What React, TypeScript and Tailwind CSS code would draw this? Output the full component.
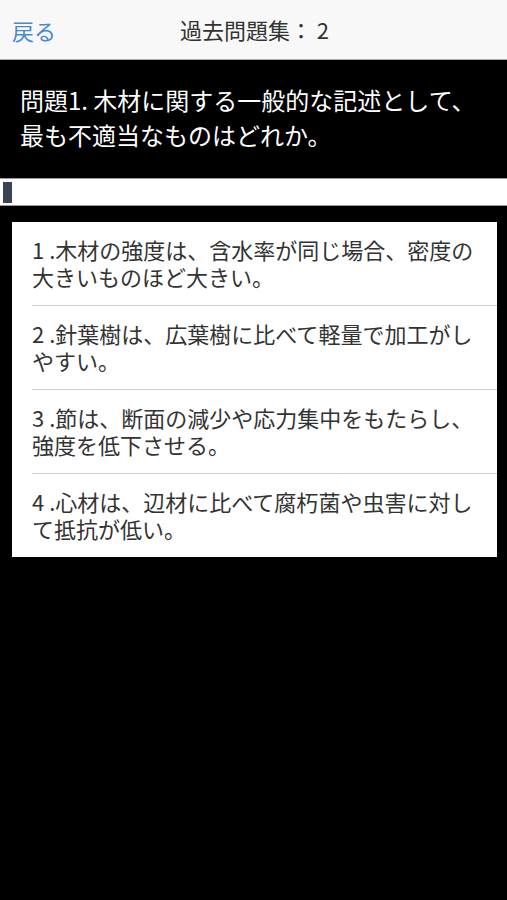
const choices = [
  "1 .木材の強度は、含水率が同じ場合、密度の大きいものほど大きい。",
  "2 .針葉樹は、広葉樹に比べて軽量で加工がしやすい。",
  "3 .節は、断面の減少や応力集中をもたらし、強度を低下させる。",
  "4 .心材は、辺材に比べて腐朽菌や虫害に対して抵抗が低い。",
];

export default function App() {
  return (
    <div
      className="min-h-[900px] bg-black"
      style={{ fontFamily: '"Noto Sans CJK JP", "Noto Sans", sans-serif' }}
    >
      {/* Nav bar */}
      <div className="relative h-[60px] bg-[#f8f8f8] border-b border-[#a9a9a9] flex items-center justify-center">
        <button className="absolute left-[12px] top-[17px] text-[22px] leading-[26px] text-[#4a88d2]">戻る</button>
        <h1 className="text-[22px] leading-[26px] text-[#333] pl-[2px] pb-[1px]">過去問題集： 2</h1>
      </div>

      {/* Question */}
      <div className="pt-[22px] pb-[26px] pl-[20px] pr-[28px] text-white text-[24px] leading-[35px]">
        問題1. 木材に関する一般的な記述として、最も不適当なものはどれか。
      </div>

      {/* Progress bar */}
      <div className="h-[28px] bg-white border-y border-[#9a9a9a] flex items-center pl-[3px]">
        <div className="w-[9px] h-[21px] bg-[#3c4350]" />
      </div>

      {/* Choices */}
      <div className="ml-[12px] mr-[10px] mt-[16px] bg-white">
        {choices.map((c, i) => (
          <div key={i} className="pl-[20px]">
            <div
              className={`pt-[14px] pb-[15px] pr-[15px] text-[22px] leading-[27px] text-[#333] ${
                i < choices.length - 1 ? "border-b border-[#cfcfcf]" : ""
              }`}
            >
              {c}
            </div>
          </div>
        ))}
      </div>
    </div>
  );
}
